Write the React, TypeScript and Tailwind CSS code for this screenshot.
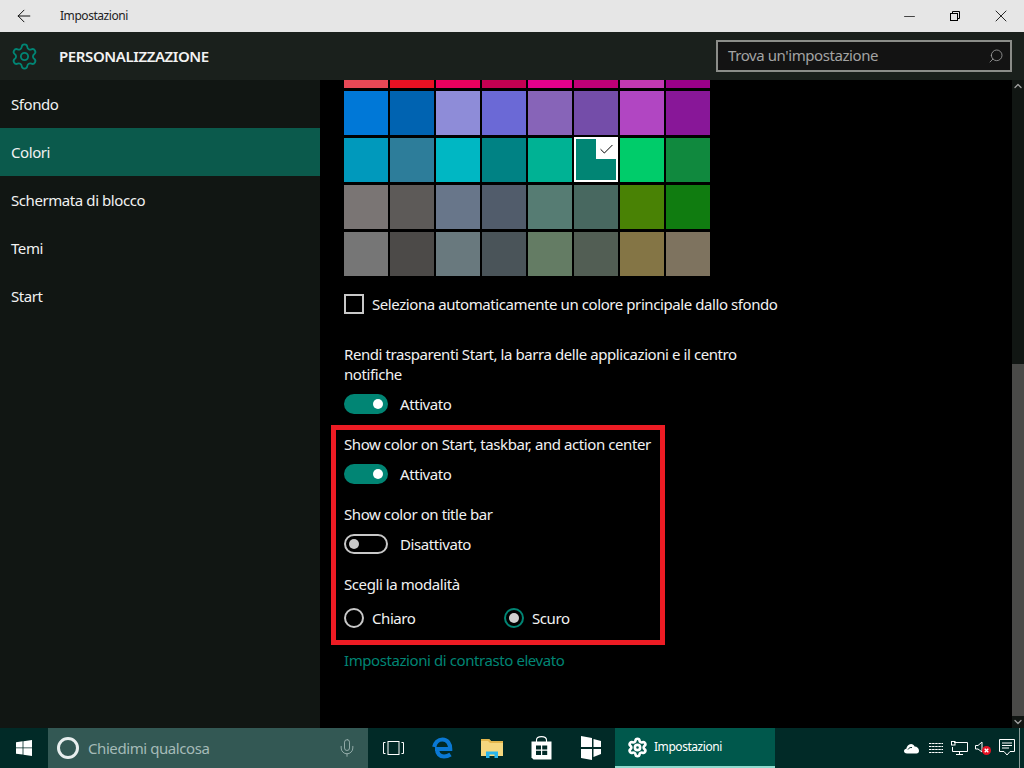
import { ArrowLeft, Settings, Search, Minus, X, Check, ChevronUp, ChevronDown, Mic } from "lucide-react";

const font = "font-['Noto_Sans','Open_Sans',sans-serif]";

const swatches = [
  ["bg-[#e74856]", "bg-[#e81123]", "bg-[#ea005e]", "bg-[#c30052]", "bg-[#e3008c]", "bg-[#bf0077]", "bg-[#c239b3]", "bg-[#9a0089]"],
  ["bg-[#0078d7]", "bg-[#0063b1]", "bg-[#8e8cd8]", "bg-[#6b69d6]", "bg-[#8764b8]", "bg-[#744da9]", "bg-[#b146c2]", "bg-[#881798]"],
  ["bg-[#0099bc]", "bg-[#2d7d9a]", "bg-[#00b7c3]", "bg-[#008284]", "bg-[#00b294]", "bg-[#018574]", "bg-[#00cc6a]", "bg-[#10893e]"],
  ["bg-[#7a7574]", "bg-[#5d5a58]", "bg-[#68768a]", "bg-[#515c6b]", "bg-[#567c73]", "bg-[#486860]", "bg-[#498205]", "bg-[#107c10]"],
  ["bg-[#767676]", "bg-[#4c4a48]", "bg-[#69797e]", "bg-[#4a5459]", "bg-[#647c64]", "bg-[#525e54]", "bg-[#847545]", "bg-[#7e735f]"],
];

const navItems = ["Sfondo", "Colori", "Schermata di blocco", "Temi", "Start"];

const Label = ({ children, className = "" }: { children: React.ReactNode; className?: string }) => (
  <div className={`text-[15px] leading-5 text-[#f2f2f2] tracking-[-0.42px] ${className}`}>{children}</div>
);

const Toggle = ({ on, label }: { on: boolean; label: string }) => (
  <div className="flex h-5 items-center gap-3">
    {on ? (
      <div className="flex h-5 w-11 items-center justify-end rounded-full bg-[#018574] pr-[5px]">
        <div className="h-2.5 w-2.5 rounded-full bg-white" />
      </div>
    ) : (
      <div className="flex h-5 w-11 items-center rounded-full border-2 border-[#c8c8c8] pl-[3px]">
        <div className="h-2.5 w-2.5 rounded-full bg-[#c8c8c8]" />
      </div>
    )}
    <Label>{label}</Label>
  </div>
);

const Radio = ({ checked, label }: { checked?: boolean; label: string }) => (
  <div className="flex h-5 items-center gap-2">
    <div
      className={`flex h-5 w-5 items-center justify-center rounded-full border-2 ${
        checked ? "border-[#018574]" : "border-[#c8c8c8]"
      }`}>
      {checked && <div className="h-2.5 w-2.5 rounded-full bg-[#d0d0d0]" />}
    </div>
    <Label>{label}</Label>
  </div>
);

const ColorGrid = () => (
  <div className="grid grid-cols-[repeat(8,44px)] grid-rows-[8px_44px_44px_44px_44px] gap-x-[2px] gap-y-[3px]">
    {swatches.flatMap((row, r) =>
      row.map((color, c) =>
        r === 2 && c === 5 ? (
          <div key={`${r}-${c}`} className={`relative -mt-px border-2 border-white ${color}`}>
            <div className="absolute right-0 top-0 flex h-5 w-5 items-center justify-center bg-white">
              <Check size={17} strokeWidth={1.4} className="text-black" />
            </div>
          </div>
        ) : (
          <div key={`${r}-${c}`} className={color} />
        )
      )
    )}
  </div>
);

const WindowsLogo = () => (
  <svg width="16" height="16" viewBox="0 0 16 16" fill="#fff">
    <polygon points="0,2.3 6.6,1.3 6.6,7.5 0,7.5" />
    <polygon points="7.4,1.2 16,0 16,7.5 7.4,7.5" />
    <polygon points="0,8.3 6.6,8.3 6.6,14.6 0,13.7" />
    <polygon points="7.4,8.3 16,8.3 16,16 7.4,14.8" />
  </svg>
);

const TaskView = () => (
  <svg width="21" height="14" viewBox="0 0 21 14" fill="none" stroke="#fff" strokeWidth="1">
    <rect x="5" y="0.5" width="11" height="13" />
    <path d="M2.5 1.5H0.5V12.5H2.5M18.5 1.5H20.5V12.5H18.5" />
  </svg>
);

const EdgeIcon = () => (
  <svg width="21" height="22" viewBox="0 0 21 22" fill="none">
    <path
      d="M3 12H18.2C18.2 6.5 15.5 2.5 10.5 2.5C6 2.5 3 6 2.2 10M5 12C5 16.5 8 19.5 12 19.5C14.5 19.5 16.5 18.8 18.5 17.5"
      stroke="#0a78d4"
      strokeWidth="4.2"
    />
  </svg>
);

const FolderIcon = () => (
  <svg width="22" height="20" viewBox="0 0 22 20">
    <path d="M0 1H8L10 3H22V18H0Z" fill="#f5d77e" />
    <path d="M0 1H8L10 3H22V5H9L7 3H0Z" fill="#e3b64c" />
    <path d="M5 13.5H17V20H13.5V16.5H8.5V20H5Z" fill="#29b5ec" />
  </svg>
);

const StoreIcon = () => (
  <svg width="21" height="24" viewBox="0 0 21 24">
    <path d="M5.5 6V4C5.5 1.8 7.5 0.6 10.5 0.6S15.5 1.8 15.5 4V6" fill="none" stroke="#fff" strokeWidth="1.1" />
    <path d="M0.5 5.5H20.5V23.5H2.5L0.5 21.5Z" fill="#fff" />
    <path d="M5 9.5H10V13.6H5ZM11.2 9.5H16.2V13.6H11.2ZM5 14.8H10V19H5ZM11.2 14.8H16.2V19H11.2Z" fill="#012a27" />
  </svg>
);

const SnapIcon = () => (
  <svg width="20" height="24" viewBox="0 0 20 24" fill="#fff">
    <polygon points="0,0 11,2 11,11 0,11" />
    <polygon points="12.5,3 20,5 20,11 12.5,11" />
    <polygon points="0,13 11,13 11,24 0,22" />
    <polygon points="12.5,13 20,13 20,18 12.5,21" />
  </svg>
);

const CloudIcon = () => (
  <svg width="15" height="11" viewBox="0 0 15 11" fill="#fff">
    <path d="M3 10.5C1 10.5 0 9.3 0 8C0 6.7 1 5.8 2.3 5.7C2.8 3.2 4.5 1 7 1C8.8 1 10 2.2 10.6 3.6C13 3.6 15 5.6 15 7.8C15 9.5 14 10.5 12.5 10.5Z" />
    <path d="M4 6.5C5 4.8 6.5 4.2 8 4.6" fill="none" stroke="#012a27" strokeWidth="1" />
  </svg>
);

const ListIcon = () => (
  <svg width="14" height="12" viewBox="0 0 14 12" stroke="#fff" strokeWidth="1" fill="none">
    <path d="M0 1.5H14M0 4.5H14M0 7.5H14M0 10.5H14" strokeDasharray="2.5 0.6" />
  </svg>
);

const NetworkIcon = () => (
  <svg width="17" height="14" viewBox="0 0 17 14" fill="none" stroke="#fff" strokeWidth="1">
    <path d="M3 1.5H16.5V10.5H1.5V6" />
    <rect x="0.5" y="0.5" width="3.5" height="3.5" />
    <path d="M8.5 10.5V13M5 13.5H12" />
  </svg>
);

const VolumeMuted = () => (
  <svg width="16" height="14" viewBox="0 0 16 14">
    <path d="M0.5 4.5H3L7 1V11L3 8H0.5Z" fill="none" stroke="#fff" strokeWidth="1" />
    <circle cx="11.5" cy="9.5" r="4.5" fill="#e81123" />
    <path d="M9.7 7.7L13.3 11.3M13.3 7.7L9.7 11.3" stroke="#fff" strokeWidth="1.3" />
  </svg>
);

const ActionCenter = () => (
  <svg width="16" height="18" viewBox="0 0 16 18" fill="none" stroke="#fff" strokeWidth="1">
    <path d="M0.5 0.5H15.5V12.5H11L8 16L5 12.5H0.5Z" />
    <path d="M3 4H13M3 6.5H13M3 9H10" />
  </svg>
);

const App = () => {
  return (
    <div className={`flex h-[768px] w-[1024px] flex-col overflow-hidden bg-black ${font}`}>
      {/* title bar */}
      <div className="flex h-8 shrink-0 items-center bg-[#e6e6e6] text-black">
        <div className="flex w-[60px] justify-center pr-3">
          <ArrowLeft size={20} strokeWidth={1.1} />
        </div>
        <span className="flex-1 text-xs tracking-[-0.45px] text-[#222]">Impostazioni</span>
        <div className="flex w-[46px] justify-center">
          <Minus size={17} strokeWidth={1} />
        </div>
        <div className="flex w-[46px] justify-center">
          <svg width="10" height="10" viewBox="0 0 10 10" fill="none" stroke="#000" strokeWidth="1">
            <rect x="0.5" y="2.5" width="7" height="7" />
            <path d="M2.5 2.5V0.5H9.5V7.5H7.5" />
          </svg>
        </div>
        <div className="flex w-[46px] justify-center">
          <X size={20} strokeWidth={1} />
        </div>
      </div>

      {/* header */}
      <div className="flex h-12 shrink-0 items-center bg-[#1a201c] pr-3">
        <div className="flex w-[59px] justify-center pr-[11px]">
          <Settings size={29} strokeWidth={1.5} className="text-[#018574]" />
        </div>
        <span className="flex-1 text-[15px] font-semibold tracking-[-0.4px] text-[#f2f2f2]">PERSONALIZZAZIONE</span>
        <div className="flex h-8 w-[296px] items-center justify-between border-2 border-[#8b8d89] bg-[#131313] pl-2.5 pr-1.5">
          <span className="-mt-px text-[15px] tracking-[-0.42px] text-[#a3a3a3]">Trova un'impostazione</span>
          <Search size={16} strokeWidth={1.2} className="-scale-x-100 text-[#a3a3a3]" />
        </div>
      </div>

      <div className="flex min-h-0 flex-1">
        {/* sidebar */}
        <div className="w-80 shrink-0 bg-[#111613]">
          {navItems.map((item) => (
            <div
              key={item}
              className={`flex h-12 items-center pl-[11px] text-[15px] tracking-[-0.42px] text-[#f2f2f2] ${
                item === "Colori" ? "bg-[#0b5a4c]" : ""
              }`}>
              {item}
            </div>
          ))}
        </div>

        {/* content */}
        <div className="flex min-w-0 flex-1 flex-col pl-6">
          <ColorGrid />
          <div className="mt-[18px] flex h-5 items-center gap-2">
            <div className="h-5 w-5 border-2 border-[#c8c8c8]" />
            <Label>Seleziona automaticamente un colore principale dallo sfondo</Label>
          </div>
          <Label className="mt-[30px] w-[420px]">
            Rendi trasparenti Start, la barra delle applicazioni e il centro notifiche
          </Label>
          <div className="mt-2.5">
            <Toggle on label="Attivato" />
          </div>

          <div className="ml-[-13px] mt-[11px] w-[334px] border-[5px] border-[#ed1c24] pb-3 pl-2 pt-1">
            <Label>Show color on Start, taskbar, and action center</Label>
            <div className="mt-2.5">
              <Toggle on label="Attivato" />
            </div>
            <Label className="mt-5">Show color on title bar</Label>
            <div className="mt-2.5">
              <Toggle on={false} label="Disattivato" />
            </div>
            <Label className="mt-5">Scegli la modalità</Label>
            <div className="mt-3.5 flex">
              <div className="w-40">
                <Radio label="Chiaro" />
              </div>
              <Radio checked label="Scuro" />
            </div>
          </div>

          <div className="mt-[5px] text-[15px] leading-5 tracking-[-0.42px] text-[#018574]">
            Impostazioni di contrasto elevato
          </div>
        </div>

        {/* scrollbar */}
        <div className="flex w-3 shrink-0 flex-col items-center bg-[#111613]">
          <ChevronUp size={12} strokeWidth={2.5} className="text-[#a0a0a0]" />
          <div className="flex-1" />
          <div className="h-[352px] w-3 bg-[#4a4a48]" />
          <ChevronDown size={12} strokeWidth={2.5} className="text-[#a0a0a0]" />
        </div>
      </div>

      {/* taskbar */}
      <div className="flex h-10 shrink-0 items-center bg-[#012a27]">
        <div className="flex w-12 justify-center">
          <WindowsLogo />
        </div>
        <div className="flex h-10 w-80 items-center bg-[#335854] pl-[9px] pr-[11px]">
          <div className="h-[22px] w-[22px] rounded-full border-[3px] border-[#e8eeee]" />
          <span className="ml-[9px] flex-1 text-[15px] tracking-[-0.42px] text-[#a5bbb8]">Chiedimi qualcosa</span>
          <Mic size={20} strokeWidth={1} className="text-[#a5bbb8]" />
        </div>
        <div className="flex w-[50px] justify-center">
          <TaskView />
        </div>
        <div className="flex w-[49px] justify-center">
          <EdgeIcon />
        </div>
        <div className="flex w-[49px] justify-center">
          <FolderIcon />
        </div>
        <div className="flex w-[50px] justify-center">
          <StoreIcon />
        </div>
        <div className="flex w-[49px] justify-center">
          <SnapIcon />
        </div>
        <div className="flex h-10 w-40 items-center gap-[6px] border-b-2 border-[#8fdccf] bg-[#00584c] pl-3">
          <Settings size={21} strokeWidth={3} className="text-white" />
          <span className="text-xs tracking-[-0.45px] text-white">Impostazioni</span>
        </div>
        <div className="flex flex-1 items-center pl-[129px]">
          <div className="flex w-[25px]">
            <CloudIcon />
          </div>
          <div className="flex w-[22px]">
            <ListIcon />
          </div>
          <div className="flex w-6">
            <NetworkIcon />
          </div>
          <div className="flex w-6">
            <VolumeMuted />
          </div>
          <div className="flex w-5">
            <ActionCenter />
          </div>
          <div className="h-10 w-px bg-[#8a9c99]" />
        </div>
      </div>
    </div>
  );
};

export default App;
